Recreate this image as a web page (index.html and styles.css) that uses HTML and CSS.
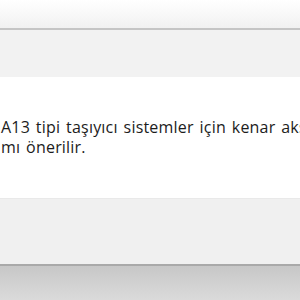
FILE: index.html
```html
<!DOCTYPE html>
<html lang="tr">
<head>
<meta charset="utf-8">
<link rel="stylesheet" href="styles.css">
</head>
<body>
<div class="dialog">
  <div class="titlebar"></div>
  <div class="toolbar"></div>
  <div class="content">
    <p class="message">A13 tipi taşıyıcı sistemler için kenar aksı kullanılması<br>mı önerilir.</p>
  </div>
  <div class="footer"></div>
  <div class="statusbar"></div>
</div>
</body>
</html>
```
FILE: styles.css
```css
html, body {
  margin: 0;
  padding: 0;
  width: 300px;
  height: 300px;
  overflow: hidden;
  background: #ffffff;
}
.dialog {
  display: flex;
  flex-direction: column;
  width: 300px;
  height: 300px;
}
.titlebar {
  height: 28px;
  background: linear-gradient(to bottom, #ffffff 0%, #fbfbfb 30%, #f1f1f1 100%);
  border-bottom: 2px solid #c5c5c5;
}
.toolbar {
  height: 47px;
  background: #f2f2f2;
}
.content {
  height: 121px;
  background: #ffffff;
  border-bottom: 1px solid #e9e9e9;
  overflow: hidden;
}
.message {
  margin: 0;
  padding: 40px 0 0 1px;
  font-family: "Open Sans", "Noto Sans", sans-serif;
  font-size: 16px;
  line-height: 20px;
  letter-spacing: 0.2px;
  word-spacing: 1.5px;
  color: #1c1c1c;
  white-space: nowrap;
  overflow: hidden;
}
.footer {
  height: 65px;
  background: #f0f0f0;
  border-bottom: 2px solid #a9a9a9;
}
.statusbar {
  flex: 1;
  background: linear-gradient(to bottom, #c7c7c7 0%, #d3d3d3 60%, #dadada 100%);
}
```
